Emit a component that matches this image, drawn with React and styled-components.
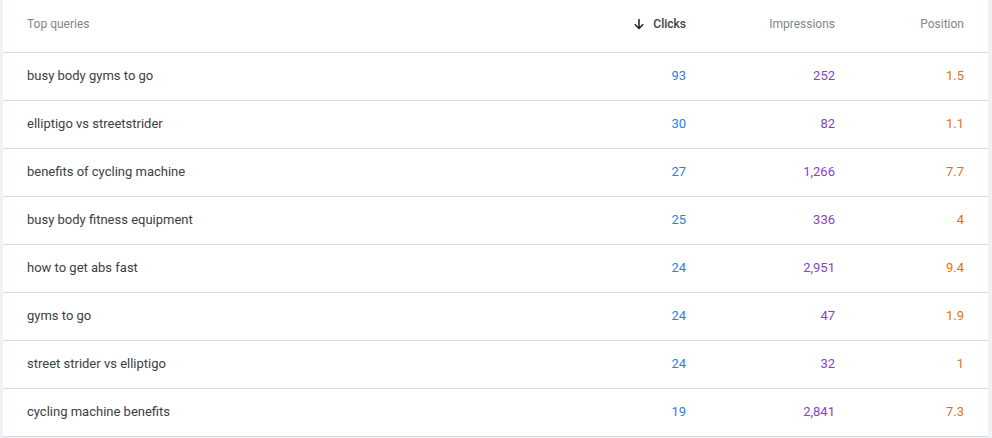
import React from 'react'
import styled, { createGlobalStyle } from 'styled-components'

const GlobalStyle = createGlobalStyle`
	body {
		margin: 0;
		background: #eef2f7;
		font-family: Roboto, 'Liberation Sans', sans-serif;
	}
`

const Page = styled.div`
	padding: 0 4px 0 3px;
	width: 992px;
	height: 438px;
	box-sizing: border-box;
	background: #eef2f7;
`

const Card = styled.div`
	background: #fff;
	height: 437px;
`

const Row = styled.div`
	display: grid;
	grid-template-columns: 1fr 149px 149px 129px;
	align-items: center;
	height: ${(p) => (p.$head ? '53px' : '48px')};
	border-bottom: 1px solid #dadce0;
	box-sizing: border-box;
`

const Cell = styled.div`
	padding: ${(p) => (p.$num ? '0 24px 2px 0' : '0 24px 2px')};
	text-align: ${(p) => (p.$num ? 'right' : 'left')};
	font-size: 13px;
	color: ${(p) => p.$color || '#3c4043'};
	white-space: nowrap;
`

const HeadCell = styled(Cell)`
	font-size: 12px;
	color: ${(p) => (p.$active ? '#3c4043' : '#80868b')};
	font-weight: ${(p) => (p.$active ? 500 : 400)};
	padding-bottom: 5px;
	display: flex;
	justify-content: ${(p) => (p.$num ? 'flex-end' : 'flex-start')};
	align-items: center;
	gap: 8px;
`

const colors = {
	clicks: '#2f7de6',
	impressions: '#8a3fc4',
	position: '#e8710a',
}

const rows = [
	['busy body gyms to go', '93', '252', '1.5'],
	['elliptigo vs streetstrider', '30', '82', '1.1'],
	['benefits of cycling machine', '27', '1,266', '7.7'],
	['busy body fitness equipment', '25', '336', '4'],
	['how to get abs fast', '24', '2,951', '9.4'],
	['gyms to go', '24', '47', '1.9'],
	['street strider vs elliptigo', '24', '32', '1'],
	['cycling machine benefits', '19', '2,841', '7.3'],
]

function ArrowDown() {
	return (
		<svg width="12" height="12" viewBox="0 0 12 12" fill="none">
			<path d="M6 1v9.5M1.8 6.3L6 10.5l4.2-4.2" stroke="#202124" strokeWidth="1.5" />
		</svg>
	)
}

export default function App() {
	return (
		<Page>
			<GlobalStyle />
			<Card>
				<Row $head>
					<HeadCell>Top queries</HeadCell>
					<HeadCell $num $active>
						<ArrowDown />
						Clicks
					</HeadCell>
					<HeadCell $num>Impressions</HeadCell>
					<HeadCell $num>Position</HeadCell>
				</Row>
				{rows.map((r) => (
					<Row key={r[0]}>
						<Cell>{r[0]}</Cell>
						<Cell $num $color={colors.clicks}>{r[1]}</Cell>
						<Cell $num $color={colors.impressions}>{r[2]}</Cell>
						<Cell $num $color={colors.position}>{r[3]}</Cell>
					</Row>
				))}
			</Card>
		</Page>
	)
}
